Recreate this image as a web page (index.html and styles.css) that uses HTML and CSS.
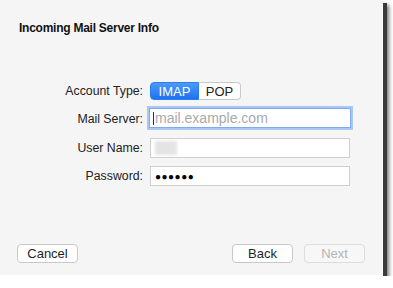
FILE: index.html
```html
<!DOCTYPE html>
<html lang="en">
<head>
    <meta charset="UTF-8" />
    <title>Incoming Mail Server Info</title>
    <link rel="stylesheet" href="styles.css">
</head>
<body>
<div class="dialog">
    <h1 class="dialog-title">Incoming Mail Server Info</h1>
    <div class="form">
        <label class="form-label">Account Type:</label>
        <div class="segmented">
            <button class="segment active">IMAP</button>
            <button class="segment">POP</button>
        </div>
        <label class="form-label" for="server">Mail Server:</label>
        <div class="field focused">
            <span class="caret"></span><span class="placeholder">mail.example.com</span>
        </div>
        <label class="form-label">User Name:</label>
        <div class="field">
            <span class="blurred"></span>
        </div>
        <label class="form-label">Password:</label>
        <div class="field">
            <span class="dots">&#9679;&#9679;&#9679;&#9679;&#9679;&#9679;</span>
        </div>
    </div>
    <div class="footer">
        <button class="btn">Cancel</button>
        <div class="footer-right">
            <button class="btn">Back</button>
            <button class="btn" disabled>Next</button>
        </div>
    </div>
</div>
</body>
</html>
```

FILE: styles.css
```css
html, body { margin: 0; padding: 0; }
body {
    background: #fff;
    font-family: 'Liberation Sans', Arial, sans-serif;
    color: #1e1e1e;
}
.dialog {
    width: 383px; height: 276px; box-sizing: border-box;
    background: #f5f5f5;
    border-right: 1px solid #fff; border-bottom: 1px solid #fff;
    box-shadow: 3px 4px 0 1px #3a3a3a, 5px 6px 4px 1px #777;
    display: flex; flex-direction: column;
    padding: 0 17px 12px 17px;
}
.dialog-title {
    font-size: 12px; font-weight: bold; margin: 21px 0 0 2px;
    letter-spacing: -0.25px;
    line-height: 14px; color: #111;
}
.form {
    display: grid; grid-template-columns: 126px 201px;
    column-gap: 7px; row-gap: 8px;
    margin-top: 47px; align-items: center;
}
.form-label { font-size: 12.3px; text-align: right; color: #222; }
.segmented { display: flex; height: 18px; }
.segment {
    font-family: inherit; font-size: 13px; padding: 0; height: 18px;
    border: 1px solid #c9c9c9; background: #fff; color: #222;
    width: 42px;
}
.segment.active {
    width: 49px; color: #fff; border-color: #2b7ef2;
    background: linear-gradient(#4b9bfa, #1e72f0);
    border-radius: 4px 0 0 4px;
}
.segment:last-child { border-left: none; border-radius: 0 4px 4px 0; }
.field {
    height: 20px; box-sizing: border-box; background: #fff;
    border: 1px solid #cfcfcf; display: flex; align-items: center;
    padding-left: 3px; width: 200px;
}
.field.focused {
    width: 202px; margin-left: -1px;
    border-color: #7faaf0;
    box-shadow: 0 0 0 2px #a8c8f6;
    margin-bottom: 2px;
}
.caret { width: 1px; height: 13px; background: #333; margin-right: 1px; }
.placeholder { font-size: 14px; color: #aaa; }
.blurred {
    width: 22px; height: 14px; background: #e4e4e4;
    filter: blur(1.5px); margin-left: 1px;
}
.dots { font-size: 10px; letter-spacing: 0.5px; color: #000; margin-left: 1px; }
.footer {
    margin-top: auto; display: flex; justify-content: space-between;
}
.footer-right { display: flex; gap: 11px; }
.btn {
    font-family: inherit; font-size: 13px; color: #1e1e1e;
    width: 61px; height: 19px; padding: 0;
    background: #fff; border: 1px solid #c8c8c8; border-radius: 4px;
}
.btn:disabled { color: #b4b4b4; border-color: #dcdcdc; background: #f7f7f7; }
```
